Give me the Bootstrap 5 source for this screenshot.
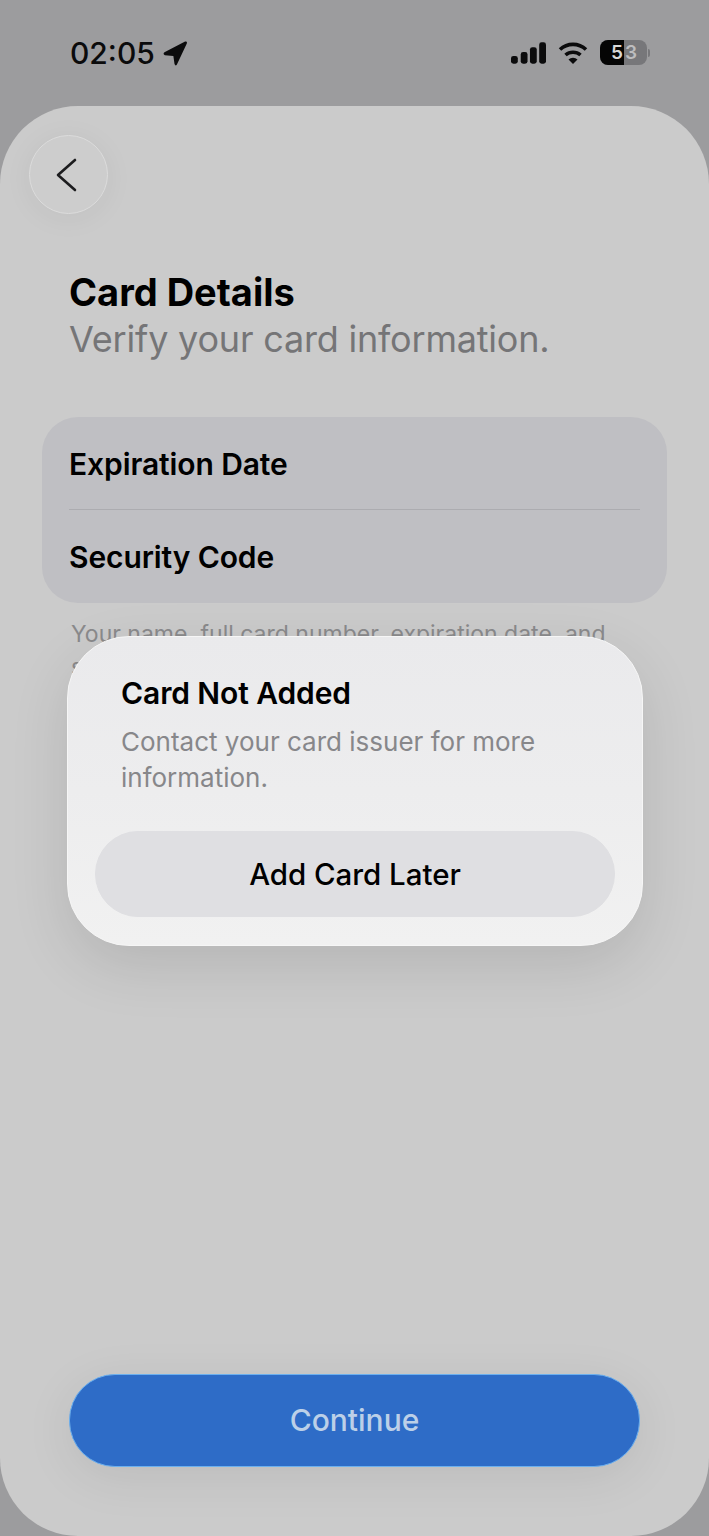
<!DOCTYPE html>
<html lang="en">
  <head>
    <meta charset="UTF-8" />
    <meta name="viewport" content="width=device-width, initial-scale=1.0" />
    <title>Card Details</title>
    <link
      href="https://cdn.jsdelivr.net/npm/bootstrap@5.3.3/dist/css/bootstrap.min.css"
      rel="stylesheet"
    />
    <style>
      html, body { height: 100%; }
      body {
        background: #9c9c9e;
        font-family: Inter, "Liberation Sans", sans-serif;
        color: #000;
        overflow: hidden;
      }
      .screen { height: 1536px; }
      .status-bar { height: 106px; padding: 35px 60px 0 70px; }
      .status-time { font-size: 30px; font-weight: 500; line-height: 36px; color: #0b0b0c; }
      .status-icons { margin-right: -1px; margin-top: 5px; }
      .batt {
        width: 47px; height: 25px; border-radius: 8px; overflow: hidden;
        background: #77777a; color: #bdbdbf; font-size: 19px; font-weight: 600; line-height: 25px;
      }
      .batt-fill { width: 24px; background: #050505; color: #d8d8d8; text-align: right; padding-right: 1px; }
      .batt-rest { width: 23px; text-align: left; padding-left: 1px; }
      .batt-cap { width: 2px; height: 8px; background: #77777a; border-radius: 0 2px 2px 0; margin-left: 1px; }
      .sheet {
        height: 1430px;
        border-radius: 78px;
        background: #cbcbcb;
        padding: 29px 42px 69px 42px;
      }
      .back-btn {
        width: 79px; height: 79px; margin-left: -13px; border-radius: 50%;
        background: #cdcdcd; border: 1px solid #dcdcdc;
        box-shadow: 0 4px 30px rgba(0,0,0,.05);
      }
      .back-btn svg { margin-right: 6px; }
      .sheet-head { padding: 56px 0 0 27px; }
      .sheet-title { font-size: 38px; font-weight: 700; line-height: 45px; margin: 0; }
      .sheet-sub { font-size: 36px; line-height: 48px; letter-spacing: -.2px; color: #757577; margin: 0; }
      .fields { margin-top: 54px; border-radius: 36px; background: #bfbfc3; padding: 0 27px; }
      .field-row { height: 92px; padding-top: 2px; font-size: 30px; font-weight: 600; letter-spacing: -.1px; }
      .field-row + .field-row { height: 94px; padding-top: 1px; border-top: 1px solid #acacb0; }
      .legal { margin: 15px 0 0 29px; width: 545px; font-size: 23px; line-height: 33px; color: #8a8a8c; }
      .btn-continue {
        --bs-btn-bg: #2e6cc7; --bs-btn-border-color: #6cb0ee;
        --bs-btn-color: #bcd0e8; --bs-btn-disabled-bg: #2e6cc7; --bs-btn-disabled-border-color: #6cb0ee;
        --bs-btn-disabled-color: #bcd0e8; --bs-btn-disabled-opacity: 1;
        margin: 0 27px; height: 93px; border-radius: 46px;
        font-size: 30px; font-weight: 500;
        box-shadow: 0 10px 50px rgba(0,0,0,.08);
      }
      .alert-box {
        position: absolute; left: 67px; top: 636px; width: 576px; height: 310px;
        border-radius: 62px; padding: 38px 27px 27px 27px;
        border: 1px solid #f6f6f6;
        background: linear-gradient(#eaeaec 0%, #ededee 50%, #f1f1f1 100%);
        box-shadow: 0 20px 60px rgba(0,0,0,.11);
      }
      .alert-title { font-size: 30px; font-weight: 600; line-height: 36px; letter-spacing: -.1px; margin: 0 0 13px 26px; }
      .alert-text { font-size: 26px; line-height: 36px; color: #87878a; margin: 0 0 35px 26px; }
      .btn-later {
        --bs-btn-bg: #dfdfe2; --bs-btn-border-color: #dfdfe2; --bs-btn-color: #000;
        height: 86px; border-radius: 43px; font-size: 29.5px; font-weight: 500; letter-spacing: -.05px;
      }
    </style>
  </head>
  <body>
    <main class="screen d-flex flex-column">
      <div class="status-bar d-flex justify-content-between align-items-start flex-shrink-0">
        <div class="d-flex align-items-center gap-2">
          <span class="status-time">02:05</span>
          <svg width="24" height="25" viewBox="0 0 25 26"><path d="M23 .5 Q25.500 0 24.800 2.500 L14.500 24.500 Q13 26.500 12 24 L10.800 15.500 L2 14.800 Q-.5 13.500 1.500 11.800 Z" fill="#0b0b0c" /></svg>
        </div>
        <div class="status-icons d-flex align-items-center gap-2">
          <svg width="35" height="22" viewBox="0 0 36 22" fill="#0b0b0c">
            <rect x="0" y="14" width="7" height="8" rx="2.5" />
            <rect x="10" y="10" width="7" height="12" rx="2.5" />
            <rect x="19.500" y="5" width="7" height="17" rx="2.5" />
            <rect x="29" y="0" width="7" height="22" rx="2.5" />
          </svg>
          <svg class="ms-1" width="30" height="24" viewBox="0 0 30 24" fill="none" stroke="#0b0b0c" stroke-width="3.6">
            <path d="M2 8.500 A19 19 0 0 1 28 8.500" />
            <path d="M7.500 14 A11.500 11.500 0 0 1 22.500 14" />
            <path d="M15 23 L10.500 18.500 A6.500 6.500 0 0 1 19.500 18.500 Z" fill="#0b0b0c" stroke="none" />
          </svg>
          <div class="d-flex align-items-center ms-1">
            <div class="batt d-flex">
              <span class="batt-fill">5</span><span class="batt-rest">3</span>
            </div>
            <span class="batt-cap"></span>
          </div>
        </div>
      </div>

      <div class="sheet d-flex flex-column flex-shrink-0">
        <button type="button" class="back-btn d-flex align-items-center justify-content-center p-0">
          <svg width="24" height="36" viewBox="0 0 24 36" fill="none" stroke="#1c1c1e" stroke-width="2.6" stroke-linecap="round" stroke-linejoin="round"><path d="M21 3 L4 18 L21 33" /></svg>
        </button>

        <div class="sheet-head">
          <h1 class="sheet-title">Card Details</h1>
          <p class="sheet-sub">Verify your card information.</p>
        </div>

        <div class="fields">
          <div class="field-row d-flex align-items-center">Expiration Date</div>
          <div class="field-row d-flex align-items-center">Security Code</div>
        </div>

        <p class="legal">Your name, full card number, expiration date, and security code are used to verify your card.</p>

        <button type="button" class="btn btn-continue mt-auto" disabled>Continue</button>
      </div>
    </main>

    <div class="alert-box d-flex flex-column">
      <h2 class="alert-title">Card Not Added</h2>
      <p class="alert-text">Contact your card issuer for more information.</p>
      <button type="button" class="btn btn-later w-100">Add Card Later</button>
    </div>

    <script src="https://cdn.jsdelivr.net/npm/bootstrap@5.3.3/dist/js/bootstrap.bundle.min.js"></script>
  </body>
</html>
